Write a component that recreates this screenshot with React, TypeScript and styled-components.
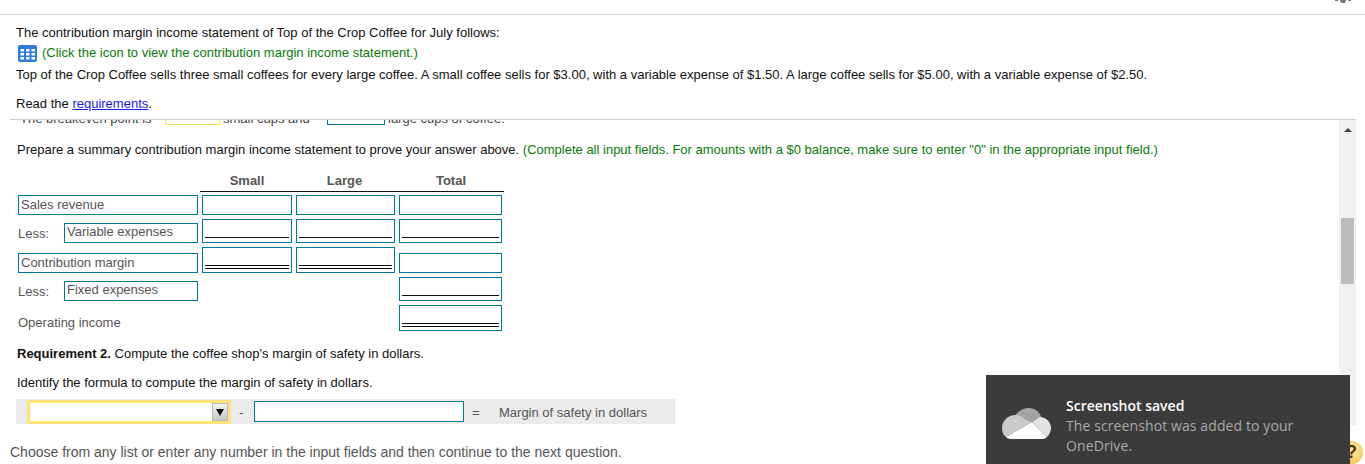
import React from "react";
import styled, { createGlobalStyle } from "styled-components";

const Global = createGlobalStyle`
  html, body { margin: 0; padding: 0; background: #fff; }
  body { font-family: "Liberation Sans", Arial, sans-serif; font-size: 13px; color: #111; }
  * { box-sizing: border-box; }
`;

const Page = styled.div`
  position: relative;
  width: 1365px;
  height: 464px;
  overflow: hidden;
  background: #fff;
`;

const TopBar = styled.div`
  height: 15px;
  border-bottom: 1px solid #ced3e0;
  display: flex;
  justify-content: flex-end;
  padding-right: 14px;
  overflow: hidden;
`;

const GearSliver = styled.svg`
  width: 16px;
  height: 16px;
  margin-top: -13px;
  flex: none;
`;

const Intro = styled.div`
  height: 104px;
  padding: 8px 0 0 16px;
`;

const Line = styled.div<{ $gap?: number; $color?: string }>`
  display: flex;
  align-items: center;
  height: 20px;
  line-height: 20px;
  margin-top: ${(p) => p.$gap ?? 0}px;
  color: ${(p) => p.$color ?? "#111"};
  white-space: pre;
`;

const GreenNote = styled.span`
  color: #0a7a0a;
`;

const GridIcon = styled.svg`
  width: 19px;
  height: 17px;
  margin: 0 5px 0 2px;
  flex: none;
`;

const Link = styled.a`
  color: #1a1ae6;
  text-decoration: underline;
`;

const Pane = styled.div`
  display: flex;
  margin-left: 10px;
  width: 1346px;
  height: 306px;
  border-top: 1px solid #cfcfcf;
`;

const PaneBody = styled.div`
  flex: 1;
  min-width: 0;
  overflow: hidden;
  padding-left: 7px;
`;

const Scrollbar = styled.div`
  width: 17px;
  flex: none;
  background: #f0f0f0;
  display: flex;
  flex-direction: column;
  align-items: center;
  padding-top: 8px;
`;

const ArrowUp = styled.div`
  width: 0;
  height: 0;
  border-left: 4px solid transparent;
  border-right: 4px solid transparent;
  border-bottom: 4px solid #444;
`;

const Thumb = styled.div`
  width: 13px;
  height: 66px;
  margin-top: 86px;
  background: #bcbcbc;
`;

const ClippedRow = styled.div`
  display: flex;
  align-items: center;
  height: 20px;
  margin-top: -15px;
  color: #444;
  white-space: pre;
`;

const ClippedText = styled.span<{ $w: number }>`
  width: ${(p) => p.$w}px;
  padding: 6px 0 0 3px;
  flex: none;
`;

const BlankBox = styled.div<{ $w: number; $yellow?: boolean }>`
  width: ${(p) => p.$w}px;
  height: 20px;
  flex: none;
  border: 1px solid ${(p) => (p.$yellow ? "#ffdf5a" : "#00789a")};
`;

const HeaderRow = styled.div`
  display: flex;
  width: 304px;
  height: 22px;
  margin: 10px 0 0 183px;
  border-bottom: 1px solid #111;
  font-weight: 700;
  color: #555;
  line-height: 22px;
  text-align: center;
`;

const HeaderCell = styled.div<{ $w: number; $pad?: number }>`
  width: ${(p) => p.$w}px;
  padding-left: ${(p) => p.$pad ?? 0}px;
`;

const StatementGrid = styled.div`
  display: grid;
  grid-template-columns: 180px 90px 99px 103px;
  grid-template-rows: 20px 24px 26px 24px 26px;
  column-gap: 4px;
  row-gap: 4px;
  align-items: end;
  margin: 3px 0 0 1px;
  width: 484px;
  color: #555;
`;

const LabelBox = styled.div`
  height: 20px;
  border: 1px solid #00789a;
  padding-left: 2px;
  line-height: 18px;
`;

const LessCell = styled.div`
  display: flex;
  align-items: flex-end;
  justify-content: space-between;
`;

const LessText = styled.span`
  line-height: 18px;
`;

const LessBox = styled(LabelBox)`
  width: 134px;
  line-height: 16px;
`;

const PlainLabel = styled.div`
  line-height: 16px;
`;

const Amount = styled.div<{ $h: number; $col?: number }>`
  height: ${(p) => p.$h}px;
  border: 1px solid #00789a;
  padding: 0 2px;
  grid-column: ${(p) => p.$col ?? "auto"};
`;

const Rule = styled.div<{ $double?: boolean; $top: number }>`
  margin-top: ${(p) => p.$top}px;
  height: ${(p) => (p.$double ? 4 : 1)}px;
  border-top: 1px solid #111;
  border-bottom: ${(p) => (p.$double ? "1px solid #111" : "none")};
`;

const FormulaRow = styled.div`
  display: flex;
  align-items: center;
  width: 659px;
  height: 25px;
  margin: 6px 0 0 -1px;
  padding-left: 11px;
  background: #ebebeb;
  color: #555;
`;

const SelectBox = styled.div`
  display: flex;
  justify-content: flex-end;
  align-items: stretch;
  width: 204px;
  height: 24px;
  margin-top: 1px;
  border: 3px solid #ffe27a;
  background: #fff;
`;

const SelectButton = styled.div`
  width: 16px;
  background: linear-gradient(#f2f2f2, #c6c6c6);
  border: 1px solid #b8b8b8;
  display: flex;
  align-items: center;
  justify-content: center;
`;

const ArrowDown = styled.div`
  width: 0;
  height: 0;
  border-left: 4px solid transparent;
  border-right: 4px solid transparent;
  border-top: 7px solid #111;
`;

const Minus = styled.span`
  width: 23px;
  padding: 2px 0 0 8px;
  flex: none;
`;

const FormulaInput = styled.div`
  width: 210px;
  height: 21px;
  background: #fff;
  border: 1px solid #00789a;
  flex: none;
`;

const Equals = styled.span`
  width: 35px;
  padding: 2px 0 0 8px;
  flex: none;
`;

const ResultLabel = styled.span`
  padding-top: 2px;
`;

const Footer = styled.div`
  padding: 17px 0 0 10px;
  font-size: 14px;
  line-height: 20px;
  color: #555;
`;

const Toast = styled.div`
  position: absolute;
  left: 986px;
  top: 375px;
  width: 364px;
  height: 89px;
  background: #3b3b3b;
  display: flex;
  padding: 21px 0 0 16px;
  font-family: "Open Sans", "Noto Sans", sans-serif;
  z-index: 2;
`;

const CloudIcon = styled.svg`
  width: 50px;
  height: 31px;
  margin-top: 12px;
  flex: none;
`;

const ToastText = styled.div`
  margin-left: 14px;
  font-size: 14px;
  line-height: 20px;
  color: #a9a9a9;
  letter-spacing: 0.1px;
  width: 250px;
`;

const ToastTitle = styled.div`
  color: #fff;
  font-weight: 600;
  letter-spacing: 0;
`;

const HelpBadge = styled.div`
  position: absolute;
  left: 1340px;
  top: 441px;
  width: 23px;
  height: 23px;
  border-radius: 50%;
  background: radial-gradient(circle at 60% 40%, #ffe9a0, #f2b53a);
  color: #4a3a10;
  font-weight: 700;
  font-size: 18px;
  line-height: 23px;
  text-align: center;
`;

export default function App() {
  return (
    <Page>
      <Global />
      <TopBar>
        <GearSliver viewBox="0 0 16 16">
          <path d="M0 13h3v1H0zM13 13h3v1h-3zM5 13h6v1.500h-1V16.500H6v-2H5z" fill="#777" />
        </GearSliver>
      </TopBar>
      <Intro>
        <Line>The contribution margin income statement of Top of the Crop Coffee for July follows:</Line>
        <Line $color="#0a7a0a">
          <GridIcon viewBox="0 0 19 17">
            <rect width="19" height="17" rx="2" fill="#2f7bd8" />
            {[2.5, 8, 13.500].map((x) =>
              [4, 8, 12].map((y) => (
                <rect key={`${x}-${y}`} x={x} y={y} width="3.500" height="2.500" fill="#fff" />
              ))
            )}
          </GridIcon>
          (Click the icon to view the contribution margin income statement.)
        </Line>
        <Line $gap={2}>
          Top of the Crop Coffee sells three small coffees for every large coffee. A small coffee sells for $3.00, with a variable expense of $1.50. A large coffee sells for $5.00, with a variable expense of $2.50.
        </Line>
        <Line $gap={9}>
          Read the <Link href="#">requirements</Link>.
        </Line>
      </Intro>
      <Pane>
        <PaneBody>
          <ClippedRow>
            <ClippedText $w={148}>The breakeven point is</ClippedText>
            <BlankBox $w={55} $yellow />
            <ClippedText $w={107}>small cups and</ClippedText>
            <BlankBox $w={58} />
            <ClippedText $w={130}>large cups of coffee.</ClippedText>
          </ClippedRow>
          <Line $gap={15}>
            Prepare a summary contribution margin income statement to prove your answer above.{" "}
            <GreenNote>
              (Complete all input fields. For amounts with a $0 balance, make sure to enter "0" in the appropriate input field.)
            </GreenNote>
          </Line>
          <HeaderRow>
            <HeaderCell $w={94}>Small</HeaderCell>
            <HeaderCell $w={101}>Large</HeaderCell>
            <HeaderCell $w={109} $pad={3}>Total</HeaderCell>
          </HeaderRow>
          <StatementGrid>
            <LabelBox>Sales revenue</LabelBox>
            <Amount $h={20} />
            <Amount $h={20} />
            <Amount $h={20} />

            <LessCell>
              <LessText>Less:</LessText>
              <LessBox>Variable expenses</LessBox>
            </LessCell>
            <Amount $h={24}><Rule $top={17} /></Amount>
            <Amount $h={24}><Rule $top={17} /></Amount>
            <Amount $h={24}><Rule $top={17} /></Amount>

            <LabelBox>Contribution margin</LabelBox>
            <Amount $h={26}><Rule $top={17} $double /></Amount>
            <Amount $h={26}><Rule $top={17} $double /></Amount>
            <Amount $h={20} />

            <LessCell>
              <LessText>Less:</LessText>
              <LessBox>Fixed expenses</LessBox>
            </LessCell>
            <Amount $h={24} $col={4}><Rule $top={17} /></Amount>

            <PlainLabel>Operating income</PlainLabel>
            <Amount $h={26} $col={4}><Rule $top={17} $double /></Amount>
          </StatementGrid>
          <Line $gap={13}>
            <b>Requirement 2.</b> Compute the coffee shop's margin of safety in dollars.
          </Line>
          <Line $gap={9}>Identify the formula to compute the margin of safety in dollars.</Line>
          <FormulaRow>
            <SelectBox>
              <SelectButton><ArrowDown /></SelectButton>
            </SelectBox>
            <Minus>-</Minus>
            <FormulaInput />
            <Equals>=</Equals>
            <ResultLabel>Margin of safety in dollars</ResultLabel>
          </FormulaRow>
        </PaneBody>
        <Scrollbar>
          <ArrowUp />
          <Thumb />
        </Scrollbar>
      </Pane>
      <Footer>Choose from any list or enter any number in the input fields and then continue to the next question.</Footer>
      <HelpBadge>?</HelpBadge>
      <Toast>
        <CloudIcon viewBox="0 0 50 31">
          <path d="M13 8C16 3 21 0 27 0c6 0 11 4 12 9l-9 5-7-3C20 9 17 8 13 8z" fill="#a3a3a3" />
          <path d="M4 29C1 27 0 24 0 20 0 13 6 7 13 7c4 0 7 1 10 4l7 3L4 29z" fill="#c9c9c9" />
          <path d="M30 14l8-5c6 0 11 5 11 11 0 4-2 7-4 9L30 14z" fill="#e2e2e2" />
          <path d="M4 29L30 14l15 15c-1 1-3 2-5 2H9c-2 0-4-1-5-2z" fill="#fff" />
        </CloudIcon>
        <ToastText>
          <ToastTitle>Screenshot saved</ToastTitle>
          The screenshot was added to your OneDrive.
        </ToastText>
      </Toast>
    </Page>
  );
}
